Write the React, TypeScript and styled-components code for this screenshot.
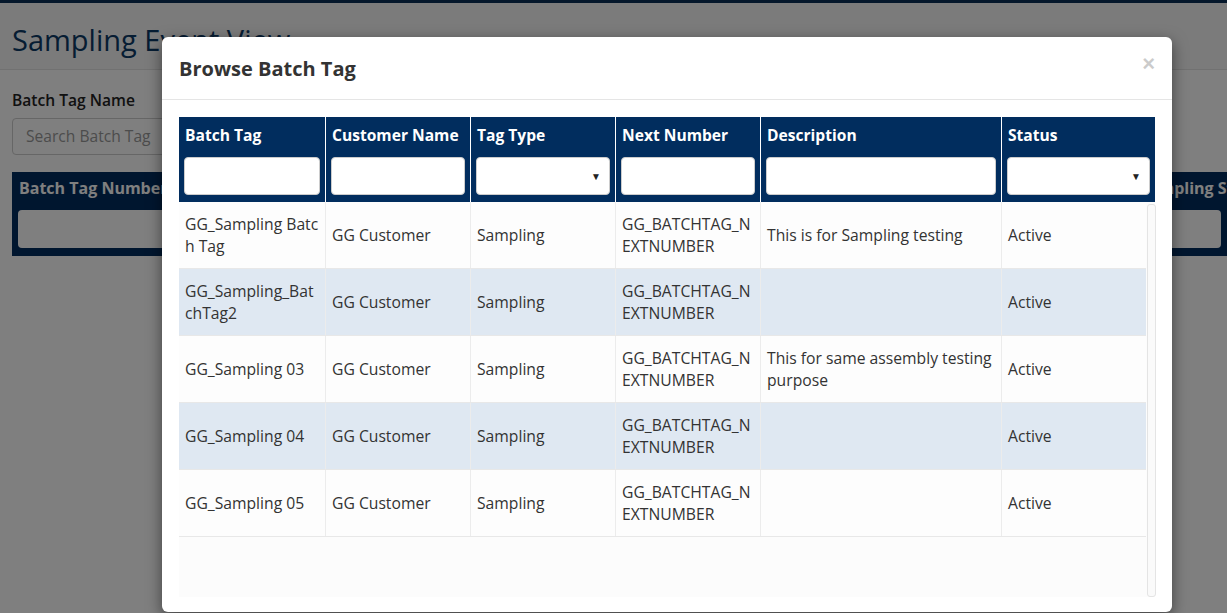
import React from "react";
import styled, { createGlobalStyle } from "styled-components";

const Global = createGlobalStyle`
  html, body { margin: 0; padding: 0; }
  body {
    font-family: "Open Sans", "Noto Sans", sans-serif;
    color: #333;
    background: #fff;
    width: 1227px;
    height: 613px;
    overflow: hidden;
  }
  * { box-sizing: border-box; }
`;

const NAVY = "#012d5e";

/* ---------- background page ---------- */
const Page = styled.div`
  position: relative;
  width: 1227px;
  height: 613px;
  overflow: hidden;
`;

const TopBar = styled.div`
  height: 3px;
  background: #0b2f57;
`;

const PageHeader = styled.header`
  height: 67px;
  background: #f6f6f6;
  border-bottom: 1px solid #e2e2e2;
  padding: 18px 12px 0;
`;

const PageTitle = styled.h1`
  margin: 0;
  font-size: 29px;
  font-weight: 400;
  line-height: 38px;
  color: #0d3a66;
`;

const PageBody = styled.main`
  padding: 19px 0 0 12px;
  display: flex;
  flex-direction: column;
`;

const FieldLabel = styled.label`
  font-size: 15.6px;
  font-weight: 600;
  line-height: 22px;
  color: #222;
`;

const SearchInput = styled.div`
  margin-top: 7px;
  width: 340px;
  height: 37px;
  border: 1px solid #ccc;
  border-radius: 4px;
  background: #fff;
  padding: 0 13px;
  font-size: 15.6px;
  line-height: 35px;
  color: #999;
`;

const BgTableHead = styled.div`
  margin-top: 17px;
  height: 84px;
  background: ${NAVY};
  display: grid;
  grid-template-columns: 200px 1fr 90px;
`;

const BgHeadCell = styled.div`
  padding: 5px 6px 8px;
  display: flex;
  flex-direction: column;
  white-space: nowrap;
  overflow: hidden;
`;

const BgHeadLabel = styled.div<{ $shift?: number }>`
  color: #fff;
  font-size: 16px;
  font-weight: 700;
  line-height: 22px;
  padding-left: 1px;
  margin-left: ${(p) => p.$shift || 0}px;
`;

const BgHeadInput = styled.div`
  margin-top: 11px;
  height: 38px;
  background: #fff;
  border-radius: 4px;
`;

/* ---------- overlay + modal ---------- */
const Backdrop = styled.div`
  position: absolute;
  inset: 0;
  background: rgba(0, 0, 0, 0.5);
`;

const Modal = styled.div`
  position: absolute;
  left: 162px;
  top: 37px;
  width: 1010px;
  height: 575px;
  background: #fff;
  border-radius: 6px;
  box-shadow: 0 5px 15px rgba(0, 0, 0, 0.5);
  display: flex;
  flex-direction: column;
`;

const ModalHeader = styled.div`
  height: 63px;
  flex: none;
  border-bottom: 1px solid #e5e5e5;
  padding: 0 17px;
  display: flex;
  align-items: center;
  justify-content: space-between;
`;

const ModalTitle = styled.h4`
  margin: 0;
  font-size: 20px;
  font-weight: 700;
  color: #333;
  line-height: 28px;
  padding-top: 2px;
`;

const CloseButton = styled.button`
  border: 0;
  background: transparent;
  padding: 0;
  margin-top: -8px;
  font-family: "Liberation Sans", Arial, sans-serif;
  font-size: 22px;
  font-weight: 700;
  line-height: 1;
  color: #000;
  opacity: 0.2;
`;

const ModalBody = styled.div`
  flex: 1;
  padding: 17px 17px 15px;
  display: flex;
  flex-direction: column;
  min-height: 0;
`;

const headCols = "147px 145px 145px 145px 241px 153px";
const bodyCols = "147px 145px 145px 145px 241px 144px";

const HeadRow = styled.div`
  display: grid;
  grid-template-columns: ${headCols};
  background: ${NAVY};
  height: 85px;
  flex: none;
`;

const HeadCell = styled.div<{ $last?: boolean }>`
  padding: 7px 5px 8px;
  border-right: ${(p) => (p.$last ? "0" : "1px solid #fff")};
  display: flex;
  flex-direction: column;
`;

const HeadLabel = styled.div`
  color: #fff;
  font-size: 15.6px;
  font-weight: 700;
  line-height: 22px;
  padding-left: 1px;
  white-space: nowrap;
`;

const FilterInput = styled.input`
  margin-top: 11px;
  height: 38px;
  width: 100%;
  border: 1px solid #ccc;
  border-radius: 4px;
  background: #fff;
  font-family: inherit;
  font-size: 15px;
  padding: 0 8px;
  outline: none;
`;

const SelectWrap = styled.div`
  position: relative;
  margin-top: 11px;
  height: 38px;
`;

const FilterSelect = styled.select`
  appearance: none;
  -webkit-appearance: none;
  width: 100%;
  height: 100%;
  border: 1px solid #ccc;
  border-radius: 4px;
  background: #fff;
  font-family: inherit;
  font-size: 15px;
  outline: none;
`;

const Caret = styled.span`
  position: absolute;
  right: 9px;
  top: 50%;
  transform: translateY(-50%);
  font-size: 10px;
  color: #222;
  pointer-events: none;
`;

const ScrollArea = styled.div`
  flex: 1;
  min-height: 0;
  display: flex;
  background: #fcfcfc;
`;

const Rows = styled.div`
  flex: 1;
  display: flex;
  flex-direction: column;
`;

const ScrollTrack = styled.div`
  width: 9px;
  flex: none;
  margin: 2px 0 0 1px;
  border: 1px solid #e4e4e4;
  border-radius: 3px;
  background: #fafafa;
`;

const BodyRow = styled.div<{ $alt?: boolean }>`
  display: grid;
  grid-template-columns: ${bodyCols};
  background: ${(p) => (p.$alt ? "#dfe8f2" : "#fdfdfd")};
  border-bottom: 1px solid #e8e8e8;
  min-height: 67px;
`;

const BodyCell = styled.div<{ $last?: boolean }>`
  padding: 10px 5px 10px 6px;
  font-size: 15.7px;
  line-height: 22.5px;
  color: #333;
  display: flex;
  align-items: center;
  word-break: break-all;
  border-right: ${(p) => (p.$last ? "0" : "1px solid #ececec")};
`;

const DescCell = styled(BodyCell)`
  word-break: normal;
`;

type Row = { tag: string; customer: string; type: string; next: string; desc: string; status: string };

const rows: Row[] = [
  { tag: "GG_Sampling Batch Tag", customer: "GG Customer", type: "Sampling", next: "GG_BATCHTAG_NEXTNUMBER", desc: "This is for Sampling testing", status: "Active" },
  { tag: "GG_Sampling_BatchTag2", customer: "GG Customer", type: "Sampling", next: "GG_BATCHTAG_NEXTNUMBER", desc: "", status: "Active" },
  { tag: "GG_Sampling 03", customer: "GG Customer", type: "Sampling", next: "GG_BATCHTAG_NEXTNUMBER", desc: "This for same assembly testing purpose", status: "Active" },
  { tag: "GG_Sampling 04", customer: "GG Customer", type: "Sampling", next: "GG_BATCHTAG_NEXTNUMBER", desc: "", status: "Active" },
  { tag: "GG_Sampling 05", customer: "GG Customer", type: "Sampling", next: "GG_BATCHTAG_NEXTNUMBER", desc: "", status: "Active" },
];

const headers: { label: string; select?: boolean }[] = [
  { label: "Batch Tag" },
  { label: "Customer Name" },
  { label: "Tag Type", select: true },
  { label: "Next Number" },
  { label: "Description" },
  { label: "Status", select: true },
];

export default function App() {
  return (
    <Page>
      <Global />
      <TopBar />
      <PageHeader>
        <PageTitle>Sampling Event View</PageTitle>
      </PageHeader>
      <PageBody>
        <FieldLabel>Batch Tag Name</FieldLabel>
        <SearchInput>Search Batch Tag</SearchInput>
        <BgTableHead>
          <BgHeadCell>
            <BgHeadLabel>Batch Tag Number</BgHeadLabel>
            <BgHeadInput />
          </BgHeadCell>
          <BgHeadCell />
          <BgHeadCell>
            <BgHeadLabel $shift={-4}>Sampling Status</BgHeadLabel>
            <BgHeadInput />
          </BgHeadCell>
        </BgTableHead>
      </PageBody>

      <Backdrop />
      <Modal>
        <ModalHeader>
          <ModalTitle>Browse Batch Tag</ModalTitle>
          <CloseButton aria-label="Close">×</CloseButton>
        </ModalHeader>
        <ModalBody>
          <HeadRow>
            {headers.map((h, i) => (
              <HeadCell key={h.label} $last={i === headers.length - 1}>
                <HeadLabel>{h.label}</HeadLabel>
                {h.select ? (
                  <SelectWrap>
                    <FilterSelect defaultValue="">
                      <option value=""></option>
                    </FilterSelect>
                    <Caret>▼</Caret>
                  </SelectWrap>
                ) : (
                  <FilterInput type="text" />
                )}
              </HeadCell>
            ))}
          </HeadRow>
          <ScrollArea>
            <Rows>
              {rows.map((r, i) => (
                <BodyRow key={r.tag} $alt={i % 2 === 1}>
                  <BodyCell>{r.tag}</BodyCell>
                  <BodyCell>{r.customer}</BodyCell>
                  <BodyCell>{r.type}</BodyCell>
                  <BodyCell>{r.next}</BodyCell>
                  <DescCell>{r.desc}</DescCell>
                  <BodyCell $last>{r.status}</BodyCell>
                </BodyRow>
              ))}
            </Rows>
            <ScrollTrack />
          </ScrollArea>
        </ModalBody>
      </Modal>
    </Page>
  );
}
